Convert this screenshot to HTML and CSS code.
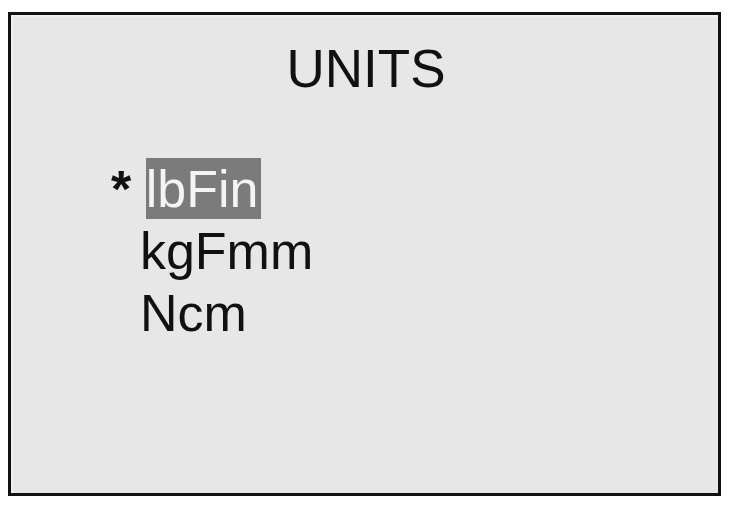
FILE: index.html
```html
<!DOCTYPE html>
<html>
<head>
<meta charset="utf-8">
<link rel="stylesheet" href="styles.css">
</head>
<body>
<div class="screen">
  <div class="title">UNITS</div>
  <div class="list">
    <div class="row"><span class="mark">*</span> <span class="sel">lbFin</span></div>
    <div class="row">  kgFmm</div>
    <div class="row">  Ncm</div>
  </div>
</div>
</body>
</html>
```
FILE: styles.css
```css
html, body {
  margin: 0;
  padding: 0;
  background: #ffffff;
}
body {
  padding: 12px 0 0 8px;
  font-family: "Liberation Sans", Arial, sans-serif;
  color: #111111;
}
.screen {
  box-sizing: border-box;
  width: 713px;
  height: 484px;
  border: 3px solid #121212;
  background: #e8e7e7;
  box-shadow: inset 2px 2px 0 #efeeee;
}
.title {
  font-size: 53px;
  line-height: 62px;
  text-align: center;
  padding-top: 23px;
  padding-left: 3px;
}
.list {
  margin-top: 58px;
  padding-left: 100px;
  font-size: 52px;
  line-height: 62px;
}
.row {
  white-space: pre;
}
.mark {
  font-weight: bold;
}
.sel {
  background: #7b7b7b;
  color: #f4f4f4;
  padding: 2px 3px 1px 0;
}
```
